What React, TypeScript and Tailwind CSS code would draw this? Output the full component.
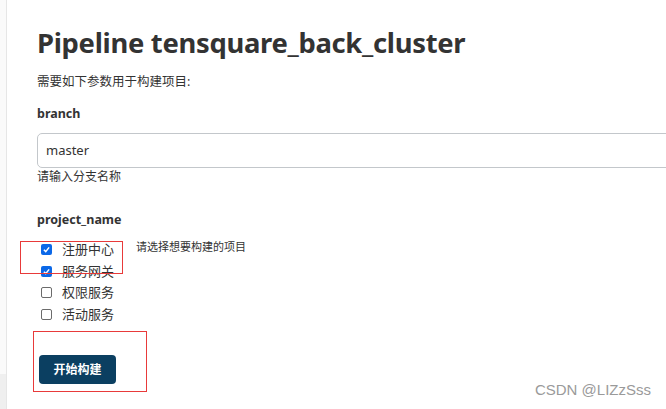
import React from 'react';

const projects = [
    { name: '注册中心', checked: true },
    { name: '服务网关', checked: true },
    { name: '权限服务', checked: false },
    { name: '活动服务', checked: false },
];

function Checkbox({ checked }: { checked: boolean }) {
    if (checked) {
        return (
            <span className="flex h-[11px] w-[11px] items-center justify-center rounded-[2px] bg-[#0b68e8]">
                <svg viewBox="0 0 12 12" className="h-[9px] w-[9px]">
                    <path d="M2.5 6.3 L5 8.8 L9.5 3.2" fill="none" stroke="white" strokeWidth="2" />
                </svg>
            </span>
        );
    }
    return <span className="h-[11px] w-[11px] rounded-[2px] border border-[#6b6b6b] bg-white" />;
}

export default function App() {
    return (
        <div className="relative flex h-[409px] w-[666px] overflow-hidden bg-white text-[#333]" style={{ fontFamily: '"Noto Sans", "Noto Sans CJK SC", sans-serif' }}>
            <div className="flex w-[7px] shrink-0 flex-col border-r border-[#e6e6e6]">
                <div className="h-[374px] bg-[#fafafa]" />
                <div className="flex-1 bg-[#efefef]" />
            </div>
            <div className="flex flex-1 flex-col pl-[30px]">
                <h1 className="mt-[23px] text-[27.4px] font-bold leading-[40px] tracking-[-0.3px] text-[#333]">
                    Pipeline tensquare_back_cluster
                </h1>
                <p className="mt-[9px] text-[12.5px] leading-[20px]">需要如下参数用于构建项目:</p>
                <div className="mt-[12px] text-[12.5px] font-bold leading-[20px]">branch</div>
                <div className="mt-[9px] -mr-[10px] flex h-[35px] items-center rounded-l-[5px] border border-[#c3c7cb] pl-[8px] text-[13px]">
                    master
                </div>
                <p className="text-[12px] leading-[18px]">请输入分支名称</p>
                <div className="mt-[24px] text-[12.5px] font-bold leading-[20px]">project_name</div>
                <div className="mt-[9px] flex">
                    <div className="relative flex flex-col pl-[4px]">
                        <div className="absolute left-[-17px] top-[2px] h-[33px] w-[103px] border border-[#e83a3a]" />
                        {projects.map((p) => (
                            <label key={p.name} className="flex h-[21.5px] items-center gap-[10px] text-[13px]">
                                <Checkbox checked={p.checked} />
                                <span>{p.name}</span>
                            </label>
                        ))}
                    </div>
                    <p className="ml-[22px] -mt-[1px] text-[11px] leading-[18px]">请选择想要构建的项目</p>
                </div>
                <div className="relative mt-[6px] h-[61px] w-[114px] -ml-[4px] border border-[#e83a3a]">
                    <button className="absolute left-[5px] top-[23px] h-[29px] w-[77px] rounded-[4px] bg-[#0b3f61] text-[12px] font-bold text-white">
                        开始构建
                    </button>
                </div>
            </div>
            <div className="absolute right-[15px] bottom-[8px] text-[15px] text-[#9a9a9a]" style={{ fontFamily: '"Liberation Sans", Arial, sans-serif' }}>
                CSDN @LIZzSss
            </div>
        </div>
    );
}
